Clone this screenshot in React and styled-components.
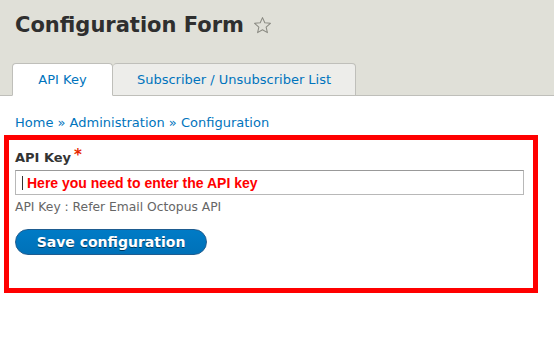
import styled, { createGlobalStyle } from "styled-components";

const GlobalStyle = createGlobalStyle`
  html, body {
    margin: 0;
    padding: 0;
    background: #fff;
    font-family: "DejaVu Sans", Verdana, sans-serif;
  }
`;

const Header = styled.div`
  background: #e0e0d8;
  border-bottom: 1px solid #bfbfba;
  padding: 12px 0 0 12px;
  height: 83px;
  box-sizing: content-box;
  display: flex;
  flex-direction: column;
  justify-content: space-between;
`;

const TitleRow = styled.div`
  display: flex;
  align-items: center;
  gap: 9px;
  padding-left: 3px;
`;

const Title = styled.h1`
  margin: 0;
  font-size: 21px;
  font-weight: bold;
  color: #2f2f2f;
  line-height: 27px;
`;

const Tabs = styled.div`
  display: flex;
  margin-bottom: -1px;
`;

const Tab = styled.div`
  height: 33px;
  display: flex;
  align-items: center;
  justify-content: center;
  width: ${(p) => p.$width}px;
  box-sizing: border-box;
  border: 1px solid #bfbfba;
  border-bottom: ${(p) => (p.$active ? "1px solid #fff" : "1px solid #bfbfba")};
  border-left: ${(p) => (p.$first ? "1px solid #bfbfba" : "none")};
  border-radius: 4px 4px 0 0;
  background: ${(p) => (p.$active ? "#fff" : "#ededea")};
  color: #0074bd;
  font-size: 13px;
`;

const Content = styled.div`
  padding: 19px 16px 0 4px;
`;

const Breadcrumb = styled.div`
  font-size: 13px;
  color: #0074bd;
  padding-left: 11px;
  line-height: 16px;
`;

const Highlight = styled.div`
  margin-top: 4px;
  border: 5px solid #ff0000;
  height: 138px;
  padding: 10px 0 0 6px;
  box-sizing: content-box;
  width: 518px;
`;

const Label = styled.div`
  font-size: 13px;
  font-weight: bold;
  color: #333;
  line-height: 16px;
  display: flex;
  gap: 3px;
`;

const Required = styled.span`
  color: #e62600;
  font-size: 15px;
  margin-top: -3px;
`;

const Input = styled.div`
  margin-top: 4px;
  width: 509px;
  height: 25px;
  box-sizing: border-box;
  border: 1px solid #b8b8b8;
  border-top-color: #999;
  display: flex;
  align-items: center;
  padding-left: 6px;
  gap: 4px;
`;

const Caret = styled.span`
  width: 1px;
  height: 14px;
  background: #333;
`;

const InputText = styled.span`
  color: #ff0000;
  font-family: "Liberation Sans", Arial, sans-serif;
  font-weight: bold;
  font-size: 14px;
`;

const Description = styled.div`
  margin-top: 5px;
  font-size: 12.3px;
  color: #666;
  line-height: 14px;
`;

const Button = styled.button`
  margin-top: 15px;
  width: 192px;
  height: 26px;
  border-radius: 13px;
  border: 1px solid #1e5c90;
  background: linear-gradient(to bottom, #007bc6, #0071b8);
  color: #fff;
  font-family: "DejaVu Sans", Verdana, sans-serif;
  font-weight: bold;
  font-size: 14px;
  text-shadow: 0 1px rgba(0, 0, 0, 0.5);
  padding: 0;
`;

const Star = () => (
  <svg width="19" height="19" viewBox="0 0 24 24" fill="none" stroke="#8a8a82" strokeWidth="1.3" strokeLinejoin="round">
    <polygon points="12,2 14.9,8.6 22,9.3 16.6,14 18.2,21 12,17.3 5.8,21 7.4,14 2,9.3 9.1,8.6" />
  </svg>
);

export default function App() {
  return (
    <>
      <GlobalStyle />
      <Header>
        <TitleRow>
          <Title>Configuration Form</Title>
          <Star />
        </TitleRow>
        <Tabs>
          <Tab $active $first $width={101}>API Key</Tab>
          <Tab $width={243}>Subscriber / Unsubscriber List</Tab>
        </Tabs>
      </Header>
      <Content>
        <Breadcrumb>Home » Administration » Configuration</Breadcrumb>
        <Highlight>
          <Label>
            API Key<Required>*</Required>
          </Label>
          <Input>
            <Caret />
            <InputText>Here you need to enter the API key</InputText>
          </Input>
          <Description>API Key : Refer Email Octopus API</Description>
          <Button>Save configuration</Button>
        </Highlight>
      </Content>
    </>
  );
}
